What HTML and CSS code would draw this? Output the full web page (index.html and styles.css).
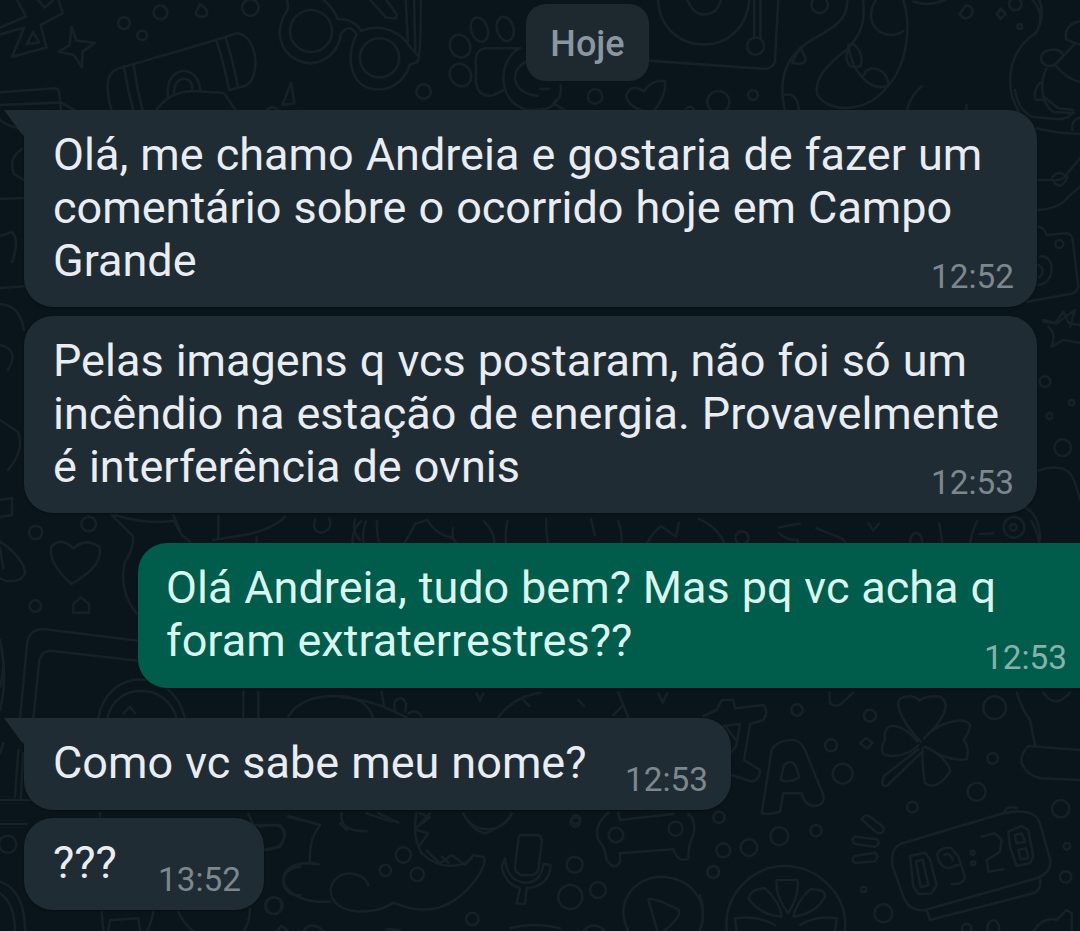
FILE: index.html
```
<!DOCTYPE html>
<html lang="pt-BR">
<head>
  <meta charset="UTF-8">
  <meta name="viewport" content="width=device-width, initial-scale=1.0">
  <title>Conversa</title>
  <link rel="stylesheet" href="styles.css">
</head>
<body>
  <svg class="wallpaper" viewBox="0 0 1080 931" aria-hidden="true">
    <!-- top left: star, camera, binoculars, paw -->
    <g transform="scale(.3444)">
      <path d="M0 80L75 48L50 0M0 100L70 80L35 165L135 138L118 72L182 38L170 0M110 0l20 22l25 -22M78 128l18 -35l18 30z"/>
      <path d="M208 78L222 118L275 125L240 150L238 195L215 160L170 150L202 132z"/>
      <path d="M0 268L160 256Q172 258 172 270L178 325M0 305L170 298M178 298L230 328"/>
      <path d="M325 325C312 280 300 215 340 200L620 118L690 96C755 110 755 235 710 250L665 262M360 192Q370 260 388 325M388 190Q398 260 415 325M628 118Q650 180 665 262M655 110Q675 170 690 248M450 325Q490 265 560 264L650 270L688 325M488 282C475 190 575 180 582 262M505 270C505 215 560 220 558 256"/>
      <circle cx="360" cy="67" r="17"/><circle cx="413" cy="103" r="14"/><circle cx="466" cy="36" r="20"/><circle cx="727" cy="22" r="24"/><path d="M580 12Q610 30 598 46Q575 55 568 38z"/>
      <circle cx="903" cy="90" r="61"/><circle cx="1102" cy="168" r="57"/>
      <path d="M833 0Q842 25 825 45C785 130 850 184 903 184C955 180 985 140 990 98Q1015 65 1035 100C1000 175 1020 260 1100 260C1150 260 1180 220 1190 188L1212 180Q1222 165 1222 0M940 0Q970 25 980 55Q1030 55 1048 90C1110 65 1165 95 1190 135L1212 160M1178 0L1184 120M1202 0L1206 150M1075 0L1120 50Q1155 60 1152 42L1122 0"/>
      <path d="M845 240L820 305L855 300zM770 325Q790 300 810 322M870 322L920 328"/>
      <circle cx="1230" cy="266" r="21"/>
      <ellipse cx="1336" cy="134" rx="29" ry="34" transform="rotate(-25 1336 134)"/><ellipse cx="1392" cy="86" rx="24" ry="36" transform="rotate(-18 1392 86)"/><ellipse cx="1467" cy="84" rx="24" ry="36" transform="rotate(-15 1467 84)"/><ellipse cx="1337" cy="218" rx="30" ry="34" transform="rotate(-35 1337 218)"/>
      <path d="M1510 140H1410Q1375 145 1382 190V240Q1390 285 1430 277L1462 262M1510 140C1450 170 1445 270 1500 305Q1530 325 1560 318M1530 178C1480 200 1480 270 1560 278"/>
    </g>

    <!-- top right: turntable, cord, flower -->
    <g transform="translate(540) scale(.3444)">
      <path d="M343 0C350 165 590 180 608 0M428 0Q445 42 475 42Q515 42 525 0M622 0V112M640 0V112M692 0L682 180Q675 198 650 200L315 176"/>
      <circle cx="626" cy="134" r="25"/><circle cx="812" cy="14" r="24"/>
      <path d="M892 0C895 60 845 85 790 115C710 165 690 230 712 325M938 0C945 60 935 95 895 140C830 190 795 230 805 275C840 330 950 330 1010 250C1065 190 1080 80 1055 0M975 0C930 75 1005 125 1055 90M756 138L772 170Q768 192 732 182zM895 130C905 210 960 270 1012 248C1010 195 950 185 940 218M895 140C880 175 900 210 932 190Q940 145 905 125M712 275Q750 270 752 325M1085 5Q1130 20 1175 0M1065 325Q1070 285 1108 250"/>
      <path d="M0 258L25 258M60 248Q65 285 40 300L78 325M0 318Q35 320 45 290M250 278Q265 240 302 265Q325 230 362 235Q370 275 325 328Q255 315 250 278z"/>
      <circle cx="160" cy="280" r="21"/><circle cx="518" cy="296" r="32"/><circle cx="618" cy="276" r="14"/><circle cx="435" cy="322" r="12"/>
      <path d="M1218 40L1238 15Q1265 22 1252 45Q1235 65 1218 40M1338 25l14 16l-14 14l-12 -14z"/><circle cx="1380" cy="12" r="18"/><circle cx="1393" cy="77" r="7"/>
      <path d="M1430 0Q1470 45 1440 95C1350 155 1345 270 1405 345M1450 0Q1468 50 1440 95M1568 62Q1520 70 1528 115L1568 130M1550 130L1495 188Q1530 230 1568 238M1495 188C1450 205 1440 150 1480 145Q1510 140 1520 160M1470 200C1450 240 1455 300 1490 325L1550 328M1452 240Q1430 265 1440 290H1460M1238 305v25"/>
    </g>

    <!-- strip right of the first bubbles -->
    <g transform="translate(980 90) scale(.3333)">
      <path d="M105 0Q115 60 155 80L235 88Q275 85 280 60L235 55L190 20M170 115Q230 130 300 132M278 120Q270 95 300 82M175 270H220Q250 275 262 250L300 205M175 360Q240 355 265 320L300 290M215 265Q235 235 262 262Q245 300 225 280zM175 410Q195 415 200 435L260 430Q275 432 278 450L295 590Q290 610 270 612L140 635M180 500C225 490 230 580 175 585M175 525Q200 540 178 562M190 690L230 700L285 660L270 710"/>
      <circle cx="238" cy="462" r="12"/>
    </g>
    <g transform="translate(980 310) scale(.3333)">
      <path d="M190 35L225 40L250 5L265 38L300 45M205 50Q230 70 215 110L250 90L300 98M175 482Q240 460 270 490Q285 510 300 570M130 590Q180 610 180 690M0 672L40 670"/>
      <circle cx="195" cy="215" r="16"/><circle cx="208" cy="318" r="9"/><circle cx="275" cy="278" r="8"/><circle cx="248" cy="413" r="25"/><circle cx="102" cy="652" r="31"/><circle cx="100" cy="652" r="10"/>
    </g>

    <!-- strip left of the first bubbles -->
    <path d="M0 120Q10 128 22 128M22 149Q8 158 14 174L24 180M0 199L25 198M0 236L12 232Q20 240 12 262M0 288L28 286M0 304Q20 305 24 330M0 345Q20 350 8 370M0 420L18 432Q25 450 8 470M0 500L12 498V515L0 517M0 640Q8 680 0 710"/>

    <!-- between second bubble and the answer -->
    <g transform="translate(0 500) scale(.3333)">
      <path d="M335 45L400 110Q400 150 375 185C360 240 375 300 410 340M345 45Q440 75 520 62L545 105L570 125M655 45V115M640 120L750 102Q830 80 855 50M520 45L540 90M770 110V130M0 125C40 150 75 190 75 220Q65 248 15 242L0 235M0 145L10 205M215 252C170 215 145 170 155 138Q185 110 220 145Q255 112 298 140C310 190 260 225 215 252z"/>
      <circle cx="107" cy="97" r="20"/><circle cx="266" cy="72" r="22"/><circle cx="106" cy="318" r="17"/><path d="M220 312l22 -20l25 20v26h-47zM945 60Q935 95 965 98Q1000 90 988 55M1065 60Q1055 95 1080 120"/>
      <path d="M60 655L82 425Q90 385 135 388L415 422M100 655L118 480Q125 455 150 452L415 482M295 655C320 500 520 500 555 655M322 655C345 545 500 545 530 655M730 575V655M775 575V655M865 650Q900 590 1000 588T1120 655M0 430Q20 490 0 560M370 640L390 620L405 640"/>
    </g>
    <g transform="translate(340 500) scale(.4719)" stroke-width="5.3">
      <path d="M45 45C20 65 20 110 45 125M55 45Q40 80 62 125M78 45Q78 85 92 125M118 125L160 50L185 42Q205 75 240 80M240 60C230 95 270 120 325 112Q335 75 305 45M355 45Q345 85 360 125M437 40Q435 85 450 125M532 40L540 75M590 45Q605 85 588 125M640 120Q650 80 680 55L712 78L718 48M760 40Q810 60 825 120M930 58L975 50M930 70Q945 85 970 85L965 125M1010 60L1065 82Q1085 110 1050 115L1035 105M1120 50l10 14l12 -14M1270 50L1282 125M1335 125Q1330 85 1350 45M1465 45Q1488 85 1482 120"/>
      <circle cx="852" cy="80" r="14"/><ellipse cx="1221" cy="90" rx="13" ry="20"/>
    </g>

    <!-- between the answer and the fourth bubble -->
    <g transform="translate(340 680) scale(.3333)">
      <path d="M0 50Q80 60 130 80L200 112M125 35L132 80M165 95Q155 55 185 55Q205 65 195 95M205 100Q230 85 245 110M410 40L420 62L430 40M475 112Q520 50 600 38M550 60L568 78M715 60L732 78M835 38L865 112M820 105L850 75M955 40L968 68L982 40M0 430L20 450M80 400L155 425M270 400L225 448M370 400Q390 445 440 448Q500 445 515 400"/>
      <circle cx="708" cy="418" r="13"/>
    </g>

    <!-- bottom right: T, A, clover, clock, lemon -->
    <g transform="translate(700 680) scale(.3333)">
      <path d="M10 108L50 90L65 60H100L105 85L190 75Q208 95 190 120L150 132L132 240L180 270Q180 300 155 305L95 285M70 138L120 132L108 200L95 215M75 138L108 180"/>
      <path d="M185 400L215 210Q230 180 280 180Q300 180 315 210L370 345Q375 375 345 378Q315 378 305 340H250L240 395Q210 405 185 400zM242 300L252 255Q275 235 288 260L298 292Q270 310 242 300z"/>
      <path d="M388 38L390 70Q410 85 425 70L460 38M662 185C600 120 570 50 620 50Q650 48 658 62Q680 45 720 50C765 75 710 140 672 175C710 130 790 105 810 135Q810 155 790 180Q810 200 800 238C750 245 710 220 675 200C710 215 750 250 750 275L735 295Q700 330 675 310Q665 250 668 205M655 195C630 225 575 235 550 222Q540 200 555 180Q550 150 570 138C610 135 635 165 652 185M655 208L552 288Q538 320 560 318L662 220"/>
      <path d="M950 38Q965 85 990 120L1005 195M1140 210L985 198Q960 225 965 250Q980 285 1020 295L1140 300M1030 38Q1065 90 1110 38"/>
      <circle cx="884" cy="83" r="34"/><circle cx="291" cy="90" r="17"/><circle cx="510" cy="107" r="18"/><circle cx="393" cy="196" r="18"/><path d="M480 190l18 -16l20 14l-16 18z"/><circle cx="428" cy="281" r="30"/><circle cx="878" cy="235" r="16"/><circle cx="830" cy="335" r="27"/><circle cx="637" cy="381" r="16"/><circle cx="1082" cy="386" r="26"/><circle cx="57" cy="412" r="17"/><circle cx="238" cy="469" r="27"/><circle cx="348" cy="452" r="17"/><circle cx="147" cy="503" r="25"/><circle cx="70" cy="511" r="21"/><circle cx="39" cy="577" r="17"/><circle cx="491" cy="628" r="8"/><circle cx="550" cy="700" r="27"/><circle cx="1101" cy="499" r="10"/><circle cx="1097" cy="591" r="17"/><circle cx="800" cy="745" r="14"/><ellipse cx="880" cy="745" rx="18" ry="24"/>
      <path d="M485 418Q495 400 510 410L550 440Q555 465 530 458zM465 470L530 478Q545 490 525 500L465 492Q450 480 465 470zM465 528L525 518Q540 530 525 544L465 549Q450 540 465 528z"/>
      <path d="M600 492L910 400Q1005 380 1020 430L1052 545Q1050 580 1010 595L675 690Q630 695 612 655L578 560Q570 510 600 492zM910 400Q920 375 950 384M680 690L690 720L1000 640Q1025 630 1020 595"/>
      <!-- clock digits -->
      <path d="M630 528L675 518L690 538L710 615L695 640L655 642L640 620zM648 545L668 538L685 615L662 622zM712 522Q725 498 755 505L775 530L795 590Q790 615 755 612M712 522Q715 560 745 565L775 555M733 525Q750 515 758 540M845 470L885 460L905 480L900 515L860 540L865 575L910 568M925 455L965 438L985 450L1000 530L990 550L950 558L930 500zM945 465L965 460L975 485L950 490zM955 510L978 505L985 535L962 538z"/>
      <circle cx="818" cy="518" r="6"/><circle cx="820" cy="550" r="6"/>
      <path d="M80 753C70 640 160 558 255 558C350 558 445 640 435 753M230 600H292Q300 640 265 700Q225 650 230 600zM145 655Q155 625 195 625Q240 665 245 710Q180 705 145 655zM375 650Q375 625 330 628Q290 665 280 710Q350 700 375 650zM110 753L105 715Q170 705 225 735M405 753L410 715Q350 705 300 735M0 645Q15 690 5 740M1000 753Q1030 710 1070 720L1100 690L1115 700V753"/>
    </g>

    <!-- bottom middle: cloud, mic, bone, play -->
    <g transform="translate(260 800) scale(.3333)">
      <path d="M0 80Q75 65 75 105Q65 150 15 150M85 48L180 75Q145 120 150 188Q195 195 165 192C90 180 50 225 80 265Q120 310 210 305M325 255C310 210 225 205 212 265C205 340 330 355 400 308C500 350 580 330 650 235Q680 190 672 172L640 165L615 195L575 165L540 190L500 152M245 38Q235 95 320 94M355 40L415 68M470 38Q455 110 485 160C540 210 600 205 635 175M480 40L510 52L480 75M470 90L505 100L480 135M545 170L565 188M610 40Q635 90 675 100Q740 75 755 40"/>
      <circle cx="430" cy="165" r="23"/><circle cx="376" cy="211" r="17"/><circle cx="472" cy="223" r="20"/><circle cx="40" cy="317" r="25"/><circle cx="637" cy="357" r="19"/><circle cx="944" cy="194" r="24"/><circle cx="931" cy="291" r="36"/><circle cx="1014" cy="270" r="24"/><circle cx="946" cy="66" r="14"/><circle cx="1068" cy="105" r="22"/><circle cx="1247" cy="86" r="21"/><circle cx="1360" cy="216" r="18"/>
      <path d="M785 105H835Q848 110 845 130L835 210Q830 225 810 225H785Q765 220 765 200L775 120Q775 105 785 105zM735 175L725 200C735 250 770 262 780 265L770 310L795 312L800 265C850 260 870 235 872 195L850 192C845 235 820 248 795 248C760 245 740 225 735 175z"/>
      <path d="M1075 38L1080 60L1240 42M1045 38Q1000 75 1015 120Q1035 140 1040 180Q1065 215 1080 185V160L1240 148Q1255 190 1285 175Q1285 130 1300 105Q1310 60 1285 42"/>
      <path d="M1105 393C1060 300 1130 230 1205 230C1300 235 1350 310 1320 393M1165 298Q1175 290 1255 328Q1270 345 1212 393M1165 298L1192 393M750 385Q820 365 900 385M970 393Q1000 360 1035 393M130 393Q155 360 190 393M380 388L420 390M50 393L65 378L85 393"/>
    </g>

    <!-- bottom left -->
    <g transform="translate(0 700) scale(.3333)">
      <path d="M55 150L45 290M70 160L62 300M0 300H100M0 372H80M0 160L10 130M300 340V352M745 340L760 375H840Q865 405 840 440L790 450M865 350L900 360M0 545Q75 570 75 693M0 580Q45 610 45 693M305 635L310 690M325 693L330 660L415 655L420 693M460 635Q455 670 440 693M535 635Q550 670 580 693M750 625Q750 670 730 693M900 500Q850 505 850 550Q860 590 900 585"/>
      <circle cx="23" cy="433" r="26"/><circle cx="823" cy="617" r="25"/>
    </g>
  </svg>

  <main class="chat">
    <div class="date">Hoje</div>

    <div class="message received tail">
      <p class="text">
        <span class="line">Olá, me chamo Andreia e gostaria de fazer um</span>
        <span class="line">comentário sobre o ocorrido hoje em Campo</span>
        <span class="line">Grande</span>
      </p>
      <time class="time">12:52</time>
    </div>

    <div class="message received">
      <p class="text">
        <span class="line">Pelas imagens q vcs postaram, não foi só um</span>
        <span class="line">incêndio na estação de energia. Provavelmente</span>
        <span class="line">é interferência de ovnis</span>
      </p>
      <time class="time">12:53</time>
    </div>

    <div class="message sent">
      <p class="text">
        <span class="line">Olá Andreia, tudo bem? Mas pq vc acha q</span>
        <span class="line">foram extraterrestres??</span>
      </p>
      <time class="time">12:53</time>
    </div>

    <div class="message received tail short name">
      <p class="text"><span class="line">Como vc sabe meu nome?</span></p>
      <time class="time">12:53</time>
    </div>

    <div class="message received short last">
      <p class="text"><span class="line">???</span></p>
      <time class="time">13:52</time>
    </div>
  </main>
</body>
</html>
```
FILE: styles.css
```
* {
  box-sizing: border-box;
}
body {
  position: relative;
  width: 1080px;
  height: 931px;
  margin: 0;
  overflow: hidden;
  background: #0a151b;
  font-family: Roboto, "Liberation Sans", sans-serif;
}
.wallpaper {
  position: absolute;
  top: 0;
  left: 0;
  width: 1080px;
  height: 931px;
  fill: none;
  stroke: #152127;
  stroke-width: 7.5;
  stroke-linecap: round;
  stroke-linejoin: round;
}
.wallpaper > path {
  stroke-width: 2.5;
}
.chat {
  position: relative;
  display: flex;
  flex-direction: column;
  align-items: flex-start;
  padding: 4px 0 0 24px;
}
.date {
  width: 123px;
  height: 77px;
  margin: 0 0 29px 502px;
  border-radius: 20px;
  background: #1d282f;
  color: #8997a1;
  font-size: 36px;
  font-weight: 500;
  line-height: 80px;
  text-align: center;
}
.message {
  position: relative;
  display: flex;
  justify-content: space-between;
  align-items: flex-end;
  width: 1013px;
  height: 197px;
  margin-bottom: 9px;
  padding: 18px 23px 10px 29px;
  border-radius: 29px;
  background: #202c33;
  box-shadow: 0 1px 2px rgba(0, 0, 0, 0.4);
}
.text {
  align-self: flex-start;
  margin: 0;
  color: #e9edf2;
  font-size: 45px;
  line-height: 53px;
  word-spacing: 0.9px;
}
.line {
  display: block;
  width: max-content;
  white-space: nowrap;
}
.time {
  margin-left: -100px;
  color: #7c878e;
  font-size: 33.3px;
  line-height: 40px;
}
.tail {
  border-top-left-radius: 0;
}
.tail::before {
  content: "";
  position: absolute;
  top: 0;
  left: -20px;
  width: 21px;
  height: 27px;
  background: #202c33;
  clip-path: polygon(0 0, 100% 0, 100% 100%, 78% 82%);
}
.sent {
  width: 980px;
  height: 145px;
  margin: 21px 0 30px 114px;
  padding: 18px 51px 10px 28px;
  background: #005c4b;
}
.sent .text {
  color: #d9f5ee;
  word-spacing: 0.7px;
}
.sent .time {
  color: #86b3a9;
}
.short {
  height: 92px;
}
.name {
  width: 707px;
  margin-bottom: 8px;
}
.last {
  width: 240px;
}
```
